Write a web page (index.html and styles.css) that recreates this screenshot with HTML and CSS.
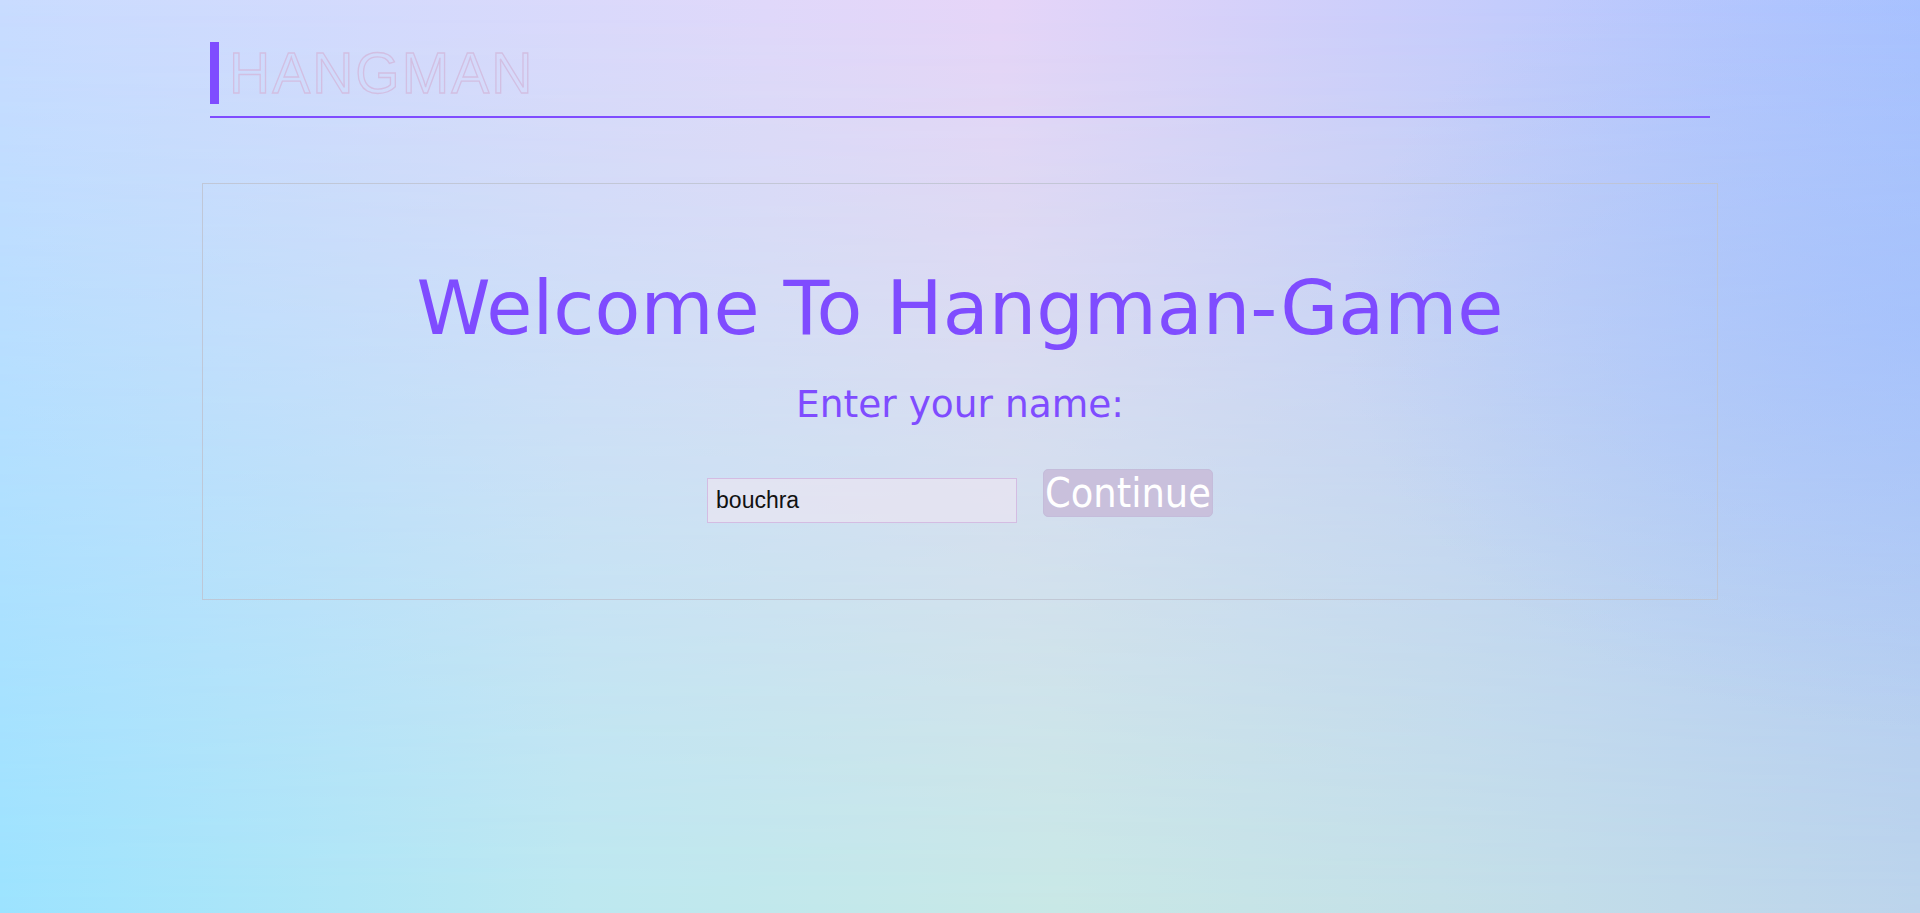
FILE: index.html
```html
<!DOCTYPE html>
<html lang="en">
<head>
<meta charset="utf-8">
<title>Hangman</title>
<link rel="stylesheet" href="styles.css">
</head>
<body>
<div class="page">
  <header class="top">
    <span class="mark"></span>
    <span class="logo">HANGMAN</span>
  </header>
  <main class="card">
    <h1 class="title">Welcome To Hangman-Game</h1>
    <p class="prompt">Enter your name:</p>
    <div class="row">
      <input class="name" type="text" value="bouchra">
      <button class="go" type="button">Continue</button>
    </div>
  </main>
</div>
</body>
</html>
```

FILE: styles.css
```css
html, body {
  margin: 0;
  height: 100%;
}
body {
  position: relative;
  min-height: 913px;
  background: linear-gradient(to right, #c9dcff 0%, #e0d8fa 40%, #e6d5f8 52%, #c4ccfc 78%, #a9c2ff 100%);
  font-family: Verdana, "DejaVu Sans", sans-serif;
  overflow: hidden;
}
body::before {
  content: "";
  position: absolute;
  inset: 0;
  background: linear-gradient(to right, #9ce3ff 0%, #bce8f0 30%, #c8e8e6 55%, #c4e0e8 75%, #bcd4ec 100%);
  -webkit-mask-image: linear-gradient(to bottom, transparent 0%, #000 100%);
  mask-image: linear-gradient(to bottom, transparent 0%, #000 100%);
  z-index: -1;
}
body::after {
  content: "";
  position: absolute;
  inset: 0;
  background: radial-gradient(ellipse 30% 45% at 100% 35%, rgba(160, 190, 255, 0.55), rgba(160, 190, 255, 0) 100%);
  z-index: -1;
}
.page {
  width: 1516px;
  margin: 0 auto;
  padding-top: 42px;
}
.top {
  display: flex;
  align-items: center;
  margin: 0 8px;
  padding-bottom: 12px;
  border-bottom: 2px solid #7f4cff;
}
.mark {
  width: 9px;
  height: 62px;
  background: #7f4cff;
  margin-right: 10px;
}
.logo {
  font-family: Arial, "Liberation Sans", sans-serif;
  font-size: 57px;
  line-height: 62px;
  letter-spacing: 2px;
  color: transparent;
  -webkit-text-stroke: 1.3px #d2bfe2;
}
.card {
  box-sizing: border-box;
  height: 417px;
  margin-top: 65px;
  border: 1px solid rgba(190, 195, 208, 0.85);
  padding-top: 79px;
  display: flex;
  flex-direction: column;
  align-items: center;
}
.title {
  margin: 0;
  font-family: Verdana, "DejaVu Sans", sans-serif;
  font-size: 75px;
  font-weight: normal;
  line-height: 90px;
  color: #7f4cff;
}
.prompt {
  margin: 30px 0 0;
  font-family: Verdana, "DejaVu Sans", sans-serif;
  font-size: 37.5px;
  line-height: 43px;
  color: #7f4cff;
}
.row {
  display: flex;
  align-items: flex-start;
  gap: 26px;
  margin-top: 43px;
}
.name {
  box-sizing: border-box;
  width: 310px;
  height: 45px;
  margin-top: 9px;
  padding: 0 8px;
  border: 1px solid #d4bce2;
  background: rgba(232, 228, 242, 0.75);
  font-family: Arial, "Liberation Sans", sans-serif;
  font-size: 23px;
  color: #111;
  outline: none;
}
.go {
  box-sizing: border-box;
  height: 48px;
  padding: 0 1px;
  border: 1px solid #c4bcda;
  border-radius: 5px;
  background: #c9c0dc;
  color: #fff;
  font-family: Tahoma, "DejaVu Sans Condensed", "DejaVu Sans", sans-serif;
  font-stretch: condensed;
  font-size: 41px;
  line-height: 46px;
}
```
